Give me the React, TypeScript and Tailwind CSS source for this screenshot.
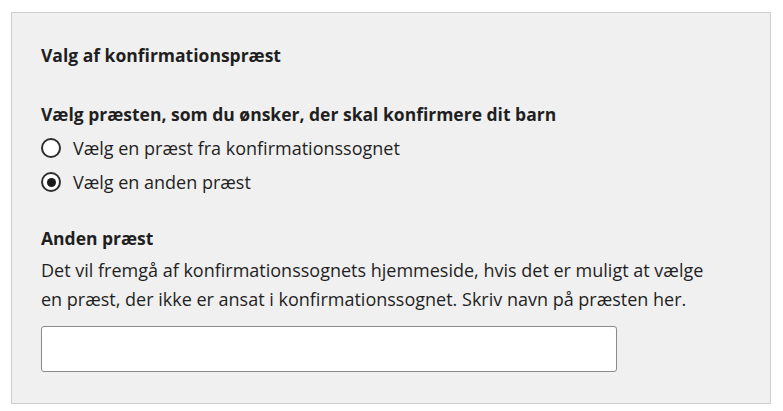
import { useState } from "react";

type Choice = "sogn" | "anden";

function Radio({
  checked,
  onSelect,
  label,
}: {
  checked: boolean;
  onSelect: () => void;
  label: string;
}) {
  return (
    <label onClick={onSelect} className="flex items-center gap-[12px] text-[18px] leading-[24px] cursor-pointer">
      <span className="w-[20px] h-[20px] rounded-full border-2 border-[#2e2e2e] bg-white flex items-center justify-center shrink-0">
        {checked && <span className="w-[9px] h-[9px] rounded-full bg-[#1a1a1a]" />}
      </span>
      {label}
    </label>
  );
}

export default function App() {
  const [choice, setChoice] = useState<Choice>("anden");
  const [name, setName] = useState("");

  return (
    <div className="bg-white w-[783px] h-[411px] pt-[12px] pl-[11px] font-['Open_Sans',_'Liberation_Sans',_sans-serif] text-[#1f1f1f]">
      <div className="w-[760px] h-[392px] bg-[#f0f0f0] border border-[#cfcfcf] pl-[29px] pt-[31px]">
        <h2 className="text-[17.5px] font-bold leading-[22px]">Valg af konfirmationspræst</h2>

        <fieldset className="mt-[36px]">
          <legend className="text-[17.5px] font-bold leading-[24px]">
            Vælg præsten, som du ønsker, der skal konfirmere dit barn
          </legend>
          <div className="mt-[10px] flex flex-col gap-[10px]">
            <Radio checked={choice === "sogn"} onSelect={() => setChoice("sogn")} label="Vælg en præst fra konfirmationssognet" />
            <Radio checked={choice === "anden"} onSelect={() => setChoice("anden")} label="Vælg en anden præst" />
          </div>
        </fieldset>

        <div className="mt-[32px]">
          <div className="text-[17.5px] font-bold leading-[24px]">Anden præst</div>
          <p className="mt-[6px] text-[18px] leading-[29px] max-w-[670px]">
            Det vil fremgå af konfirmationssognets hjemmeside, hvis det er muligt at vælge en præst, der ikke er ansat i konfirmationssognet. Skriv navn på præsten her.
          </p>
          <input
            value={name}
            onChange={(e) => setName(e.target.value)}
            className="mt-[12px] block w-[576px] h-[46px] bg-white border border-[#8a8a8a] rounded-[3px] px-3 text-[18px] outline-none"
          />
        </div>
      </div>
    </div>
  );
}
